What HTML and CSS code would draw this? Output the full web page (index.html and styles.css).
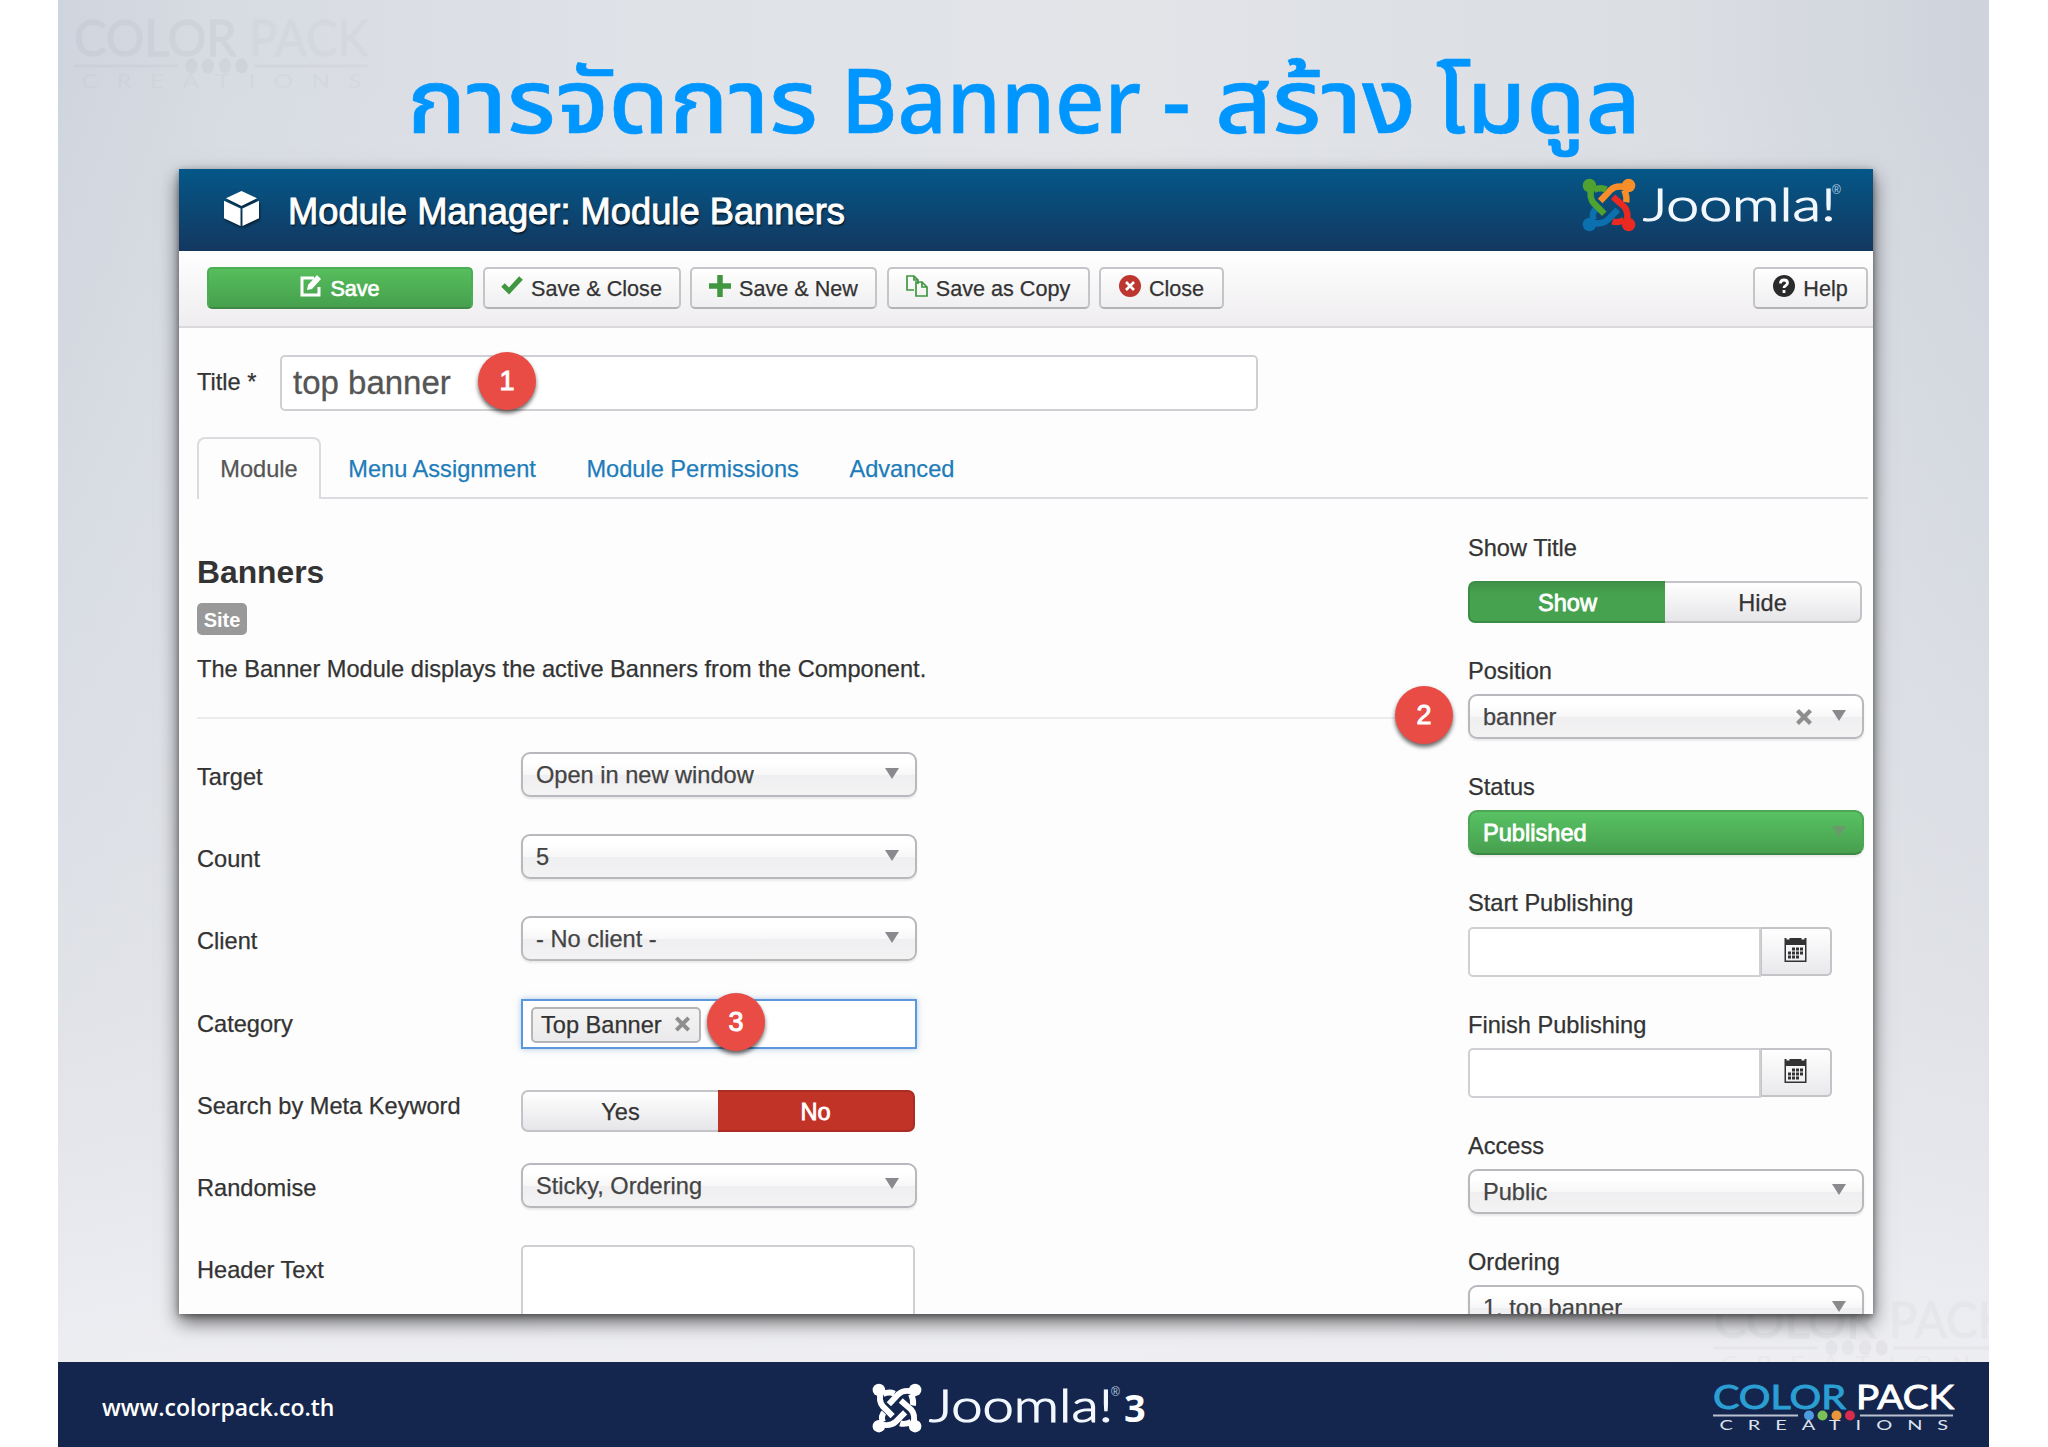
FILE: index.html
```html
<!DOCTYPE html>
<html lang="th">
<head>
  <meta charset="UTF-8">
  <title>การจัดการ Banner - สร้าง โมดูล</title>
  <link rel="stylesheet" href="styles.css">
</head>
<body>

  <!-- shared shapes -->
  <svg class="defs" width="0" height="0">
    <symbol id="joomla-mark" viewBox="0 0 160 160">
      <g class="arm arm-blue">
        <circle cx="22" cy="138" r="20"/>
        <path d="M35 125Q26 105 42 90M28 132Q58 140 75 125L106 94"/>
      </g>
      <g class="arm arm-orange">
        <circle cx="138" cy="22" r="20"/>
        <path d="M125 35Q134 55 131 72"/>
        <path class="gap" d="M84 38L60 62"/>
        <path d="M132 28Q102 20 85 35L54 68"/>
      </g>
      <g class="arm arm-red">
        <circle cx="138" cy="138" r="20"/>
        <path d="M125 125Q105 134 90 129"/>
        <path class="gap" d="M96 60L120 84"/>
        <path d="M132 132Q140 102 125 85L92 56"/>
      </g>
      <g class="arm arm-green">
        <circle cx="22" cy="22" r="20"/>
        <path d="M35 35Q55 26 72 34"/>
        <path class="gap" d="M40 78L64 102"/>
        <path d="M28 28Q20 58 35 75L66 106"/>
      </g>
    </symbol>
    <symbol id="calendar" viewBox="0 0 22 25">
      <path fill="#333" fill-rule="evenodd" d="M0 1h2v1.500h3V1h12v1.500h3V1h2v24H0zM1.500 8v15.500h19V8z"/>
      <path fill="#333" d="M7.500 10.500h3v3h-3zm4 0h3v3h-3zm4 0h3v3h-3zM3.500 14.500h3v3h-3zm4 0h3v3h-3zm4 0h3v3h-3zm4 0h3v3h-3zM3.500 18.500h3v3h-3zm4 0h3v3h-3zm4 0h3v3h-3z"/>
    </symbol>
    <symbol id="cross" viewBox="0 0 18 18">
      <path d="M2.500 2.500l13 13M15.500 2.500l-13 13" stroke="#8e8e8e" stroke-width="4.200" fill="none"/>
    </symbol>
    <symbol id="color-pack" viewBox="0 0 242 48" preserveAspectRatio="none">
      <text class="cp-color" x="0" y="25" textLength="133" lengthAdjust="spacingAndGlyphs">COLOR</text>
      <text class="cp-pack" x="143" y="25" textLength="98" lengthAdjust="spacingAndGlyphs">PACK</text>
      <path class="cp-line" d="M0 31.500h85M147 31.500h93"/>
      <circle cx="96" cy="31.500" r="5" fill="#4f9be0"/>
      <circle cx="109.500" cy="31.500" r="5" fill="#7bbf57"/>
      <circle cx="123.500" cy="31.500" r="5" fill="#e8963a"/>
      <circle cx="137" cy="31.500" r="5" fill="#d92b4b"/>
      <text class="cp-sub" transform="scale(1.6 1)" x="4" y="46" textLength="143">CREATIONS</text>
    </symbol>
  </svg>

  <main class="slide">
    <svg class="watermark watermark-top"><use href="#color-pack"/></svg>
    <svg class="watermark watermark-bottom"><use href="#color-pack"/></svg>

    <h1 class="slide-title">
      <svg width="1240" height="169">
        <text x="0" y="133" textLength="411" lengthAdjust="spacingAndGlyphs">การจัดการ</text>
        <text x="434" y="133" textLength="300" lengthAdjust="spacingAndGlyphs">Banner</text>
        <text x="755" y="133">-</text>
        <text x="808" y="133" textLength="201" lengthAdjust="spacingAndGlyphs">สร้าง</text>
        <text x="1029" y="133" textLength="205" lengthAdjust="spacingAndGlyphs">โมดูล</text>
      </svg>
    </h1>

    <section class="window">
      <header class="window-header">
        <svg class="cube" viewBox="0 0 36 36">
          <path fill="#fff" d="M18 0l16 7.500-16 8-16-8zM0 10l17 8v18L0 28zM36 10l-17 8v18l17-8z"/>
        </svg>
        <h2>Module Manager: Module Banners</h2>
        <svg class="joomla-logo" width="264" height="60" viewBox="0 0 264 60">
          <use href="#joomla-mark" x="0" y="3" width="54" height="54"/>
          <text class="wordmark" x="61" y="46" textLength="193" lengthAdjust="spacingAndGlyphs">Joomla!</text>
          <text class="reg" x="250" y="19">®</text>
        </svg>
      </header>

      <div class="toolbar">
        <button class="btn btn-save">
          <svg viewBox="0 0 22 22"><path d="M14 3H2v17h17v-8" fill="none" stroke="#fff" stroke-width="3"/><path d="M7 15l1-5 9-10 4 4-9 10z" fill="#fff"/></svg>
          Save
        </button>
        <button class="btn btn-save-close">
          <svg viewBox="0 0 22 22"><path d="M2 10l6 6L20 3" fill="none" stroke="#409740" stroke-width="5"/></svg>
          Save &amp; Close
        </button>
        <button class="btn btn-save-new">
          <svg viewBox="0 0 22 22"><path d="M11 0v22M0 11h22" stroke="#409740" stroke-width="5.500"/></svg>
          Save &amp; New
        </button>
        <button class="btn btn-copy">
          <svg viewBox="0 0 22 22"><path d="M8 15H1V1h7l4 4v4M8 1v4h4M10 7h6l5 5v9H10zM16 7v5h5" fill="none" stroke="#409740" stroke-width="1.700"/></svg>
          Save as Copy
        </button>
        <button class="btn btn-close">
          <svg viewBox="0 0 22 22"><circle cx="11" cy="11" r="11" fill="#bd362f"/><path d="M7 7l8 8M15 7l-8 8" stroke="#fff" stroke-width="2.600"/></svg>
          Close
        </button>
        <button class="btn btn-help">
          <svg viewBox="0 0 22 22"><circle cx="11" cy="11" r="11" fill="#2b2b2b"/><path d="M7.500 8.500q0-3.500 3.500-3.500t3.500 3q0 1.500-2 2.700-1.500.8-1.500 2.300M11 15v3" fill="none" stroke="#fff" stroke-width="2.800"/></svg>
          Help
        </button>
      </div>

      <div class="title-row">
        <label for="title">Title *</label>
        <input id="title" class="title-input" type="text" value="top banner">
        <span class="badge badge-1">1</span>
      </div>

      <nav class="tabs">
        <a class="tab active">Module</a>
        <a class="tab">Menu Assignment</a>
        <a class="tab">Module Permissions</a>
        <a class="tab">Advanced</a>
      </nav>

      <div class="columns">
        <div class="main-col">
          <h3>Banners</h3>
          <span class="site-label">Site</span>
          <p>The Banner Module displays the active Banners from the Component.</p>
          <hr>

          <div class="row"><span class="label">Target</span><div class="select">Open in new window<i class="caret"></i></div></div>
          <div class="row"><span class="label">Count</span><div class="select">5<i class="caret"></i></div></div>
          <div class="row"><span class="label">Client</span><div class="select">- No client -<i class="caret"></i></div></div>
          <div class="row">
            <span class="label">Category</span>
            <div class="multi">
              <span class="chip">Top Banner <svg><use href="#cross"/></svg></span>
              <span class="badge badge-3">3</span>
            </div>
          </div>
          <div class="row">
            <span class="label">Search by Meta Keyword</span>
            <div class="switch switch-meta"><span>Yes</span><span class="on-red">No</span></div>
          </div>
          <div class="row"><span class="label">Randomise</span><div class="select">Sticky, Ordering<i class="caret"></i></div></div>
          <div class="row"><span class="label">Header Text</span><div class="textarea"></div></div>
        </div>

        <aside class="side-col">
          <div class="field field-show">
            <span class="label">Show Title</span>
            <div class="switch"><span class="on-green">Show</span><span>Hide</span></div>
          </div>
          <div class="field">
            <span class="label">Position</span>
            <div class="select">banner<svg class="clear"><use href="#cross"/></svg><i class="caret"></i></div>
            <span class="badge badge-2">2</span>
          </div>
          <div class="field">
            <span class="label">Status</span>
            <div class="select published">Published<i class="caret"></i></div>
          </div>
          <div class="field">
            <span class="label">Start Publishing</span>
            <div class="date"><span class="date-input"></span><span class="date-btn"><svg><use href="#calendar"/></svg></span></div>
          </div>
          <div class="field">
            <span class="label">Finish Publishing</span>
            <div class="date"><span class="date-input"></span><span class="date-btn"><svg><use href="#calendar"/></svg></span></div>
          </div>
          <div class="field">
            <span class="label">Access</span>
            <div class="select">Public<i class="caret"></i></div>
          </div>
          <div class="field">
            <span class="label">Ordering</span>
            <div class="select">1. top banner<i class="caret"></i></div>
          </div>
        </aside>
      </div>
    </section>

    <footer class="footer">
      <span class="site-url">www.colorpack.co.th</span>
      <svg class="footer-joomla" width="280" height="60" viewBox="0 0 280 60">
        <use href="#joomla-mark" x="0" y="4" width="50" height="50"/>
        <text class="wordmark" x="57" y="43" textLength="184" lengthAdjust="spacingAndGlyphs">Joomla!</text>
        <text class="reg" x="239" y="17">®</text>
        <text class="three" x="252" y="43">3</text>
      </svg>
      <svg class="footer-logo"><use href="#color-pack"/></svg>
    </footer>
  </main>

</body>
</html>
```
FILE: styles.css
```css
* {
  box-sizing: border-box;
}

body {
  margin: 0;
  background: #fff;
  font-family: "Liberation Sans", Arial, sans-serif;
  font-size: 23.6px;
  color: #333;
  overflow: hidden;
}

.defs {
  position: absolute;
}

.slide {
  position: relative;
  display: flex;
  flex-direction: column;
  width: 1931px;
  height: 1447px;
  margin-left: 58px;
  overflow: hidden;
  background:
    linear-gradient(to bottom, rgba(232, 233, 237, 0) 5%, rgba(230, 231, 235, 0.75) 70%, rgba(240, 240, 244, 0.9) 94%),
    linear-gradient(to right, #cfd5de 0%, #d7dbe2 8%, #dfe2e7 30%, #e2e4e8 55%, #dadde2 85%, #ced3dc 100%);
}

/* Color Pack logo */
.cp-color, .cp-pack {
  font-family: Lato, sans-serif;
  font-size: 33px;
  fill: #2b9fd4;
  stroke: #2b9fd4;
  stroke-width: 0.9px;
}

.cp-pack {
  fill: #fff;
  stroke: #fff;
}

.cp-line {
  stroke: #b9c0d0;
  stroke-width: 2;
}

.cp-sub {
  font-family: Lato, sans-serif;
  font-size: 12.5px;
  fill: #dfe3ee;
}

.watermark {
  position: absolute;
  width: 296px;
  height: 73px;
  opacity: 0.045;
  filter: grayscale(0.7) brightness(0.5);
}

.watermark-top {
  left: 16px;
  top: 18px;
}

.watermark-bottom {
  left: 1656px;
  top: 1300px;
}

.slide-title {
  height: 169px;
  margin: 0 0 0 349px;
}

.slide-title svg {
  display: block;
  overflow: visible;
}

.slide-title text {
  font-family: "Noto Sans", "Noto Sans Thai", sans-serif;
  font-size: 89px;
  font-weight: 500;
  fill: #0096ff;
  stroke: #0096ff;
  stroke-width: 0.6px;
}

/* Joomla window */
.window {
  position: relative;
  flex: none;
  width: 1694px;
  height: 1145px;
  margin-left: 121px;
  background: #fdfdfd;
  overflow: hidden;
  box-shadow: 0 8px 18px rgba(0, 0, 0, 0.6), 0 2px 6px rgba(0, 0, 0, 0.35);
}

.window-header {
  display: flex;
  align-items: center;
  height: 82px;
  padding: 0 28px 0 45px;
  background: linear-gradient(#045788, #133860);
}

.cube {
  width: 35px;
  height: 37px;
  margin-top: -4px;
  filter: drop-shadow(1px 2px 1px rgba(0, 0, 0, 0.5));
}

.window-header h2 {
  margin: 4px 0 0 29px;
  font-size: 36.3px;
  font-weight: normal;
  color: #fff;
  -webkit-text-stroke: 0.9px #fff;
  text-shadow: 1px 2px 2px rgba(0, 0, 0, 0.7);
}

.joomla-logo {
  margin: -10px -1px 0 auto;
}

.arm {
  fill: none;
  stroke-width: 19;
}

.arm-green { color: var(--mark, #4fa22f); }
.arm-orange { color: var(--mark, #f78e2a); }
.arm-red { color: var(--mark, #ea2a20); }
.arm-blue { color: var(--mark, #0c6fae); }

.arm circle {
  fill: currentColor;
}

.arm path {
  stroke: currentColor;
}

/* dark edge where one white arm crosses another */
.arm .gap {
  stroke: var(--gap, none);
  stroke-width: 26;
}

.wordmark {
  font-family: Lato, sans-serif;
  font-weight: 300;
  font-size: 45px;
  fill: #f3f8ff;
  stroke: #f3f8ff;
  stroke-width: 1.2px;
}

.reg {
  font-size: 12px;
  fill: #b9cfe6;
}

.toolbar {
  display: flex;
  align-items: flex-start;
  height: 77px;
  padding: 16px 5px 0 28px;
  background: linear-gradient(#fff, #efedef);
  border-bottom: 2px solid #d9d9db;
}

.btn {
  display: flex;
  align-items: center;
  justify-content: center;
  gap: 8px;
  height: 42px;
  margin: 0 0 0 9.5px;
  padding: 2px 0 0;
  border: 2px solid #c5c4c8;
  border-bottom-color: #b3b2b5;
  border-radius: 5px;
  background: linear-gradient(#fff, #efeef0);
  font-family: inherit;
  font-size: 21.6px;
  color: #333;
  -webkit-text-stroke: 0.25px currentColor;
}

.btn svg {
  width: 22px;
  height: 22px;
  margin-top: -6px;
}

.btn-save {
  width: 266px;
  margin-left: 0;
  background: linear-gradient(#56bd5c, #46a04d);
  border-color: #4cae54;
  border-bottom-color: #3f8a45;
  color: #fff;
  -webkit-text-stroke: 0.7px #fff;
}

.btn-save-close { width: 198px; }
.btn-save-new { width: 187px; }
.btn-copy { width: 203px; }
.btn-close { width: 125px; }
.btn-help { width: 115px; margin-left: auto; }

.title-row {
  position: relative;
  display: flex;
  align-items: center;
  height: 109px;
  padding-left: 18px;
}

.title-row label {
  width: 83px;
}

.title-input {
  width: 978px;
  height: 56px;
  padding: 0 11px;
  border: 2px solid #d0d0d4;
  border-radius: 5px;
  background: #fff;
  font-family: inherit;
  font-size: 33px;
  color: #555;
  -webkit-text-stroke: 0.3px currentColor;
}

.title-row label,
.label,
.tab,
.select,
.chip,
.switch,
.main-col p {
  -webkit-text-stroke: 0.25px currentColor;
}

/* numbered callouts */
.badge {
  position: absolute;
  width: 58px;
  height: 58px;
  border-radius: 50%;
  background: #e94b45;
  box-shadow: 0 3px 4px rgba(0, 0, 0, 0.6);
  color: #fff;
  font-size: 27px;
  -webkit-text-stroke: 1px #fff;
  line-height: 59px;
  text-align: center;
}

.badge-1 {
  left: 299px;
  top: 24px;
}

.badge-2 {
  left: -73px;
  top: 28px;
}

.badge-3 {
  left: 184px;
  top: -8px;
}

.tabs {
  display: flex;
  height: 62px;
  margin: 0 5px 0 18px;
  border-bottom: 2px solid #dcdbe0;
}

.tab {
  height: 60px;
  margin-right: 4px;
  padding: 0 21.3px;
  border: 2px solid transparent;
  border-bottom: none;
  line-height: 60px;
  color: #1d7cba;
}

.tab.active {
  height: 62px;
  border-color: #dcdbe0;
  border-radius: 8px 8px 0 0;
  background: #fdfdfd;
  color: #555;
}

.columns {
  display: flex;
  padding-left: 18px;
}

.main-col {
  width: 1200px;
  margin-right: 71px;
}

.main-col h3 {
  margin: 55px 0 0;
  font-size: 31.8px;
  line-height: 36px;
}

.site-label {
  display: block;
  width: 50px;
  height: 32px;
  margin-top: 13px;
  border-radius: 5px;
  background: #999;
  color: #fff;
  font-size: 20px;
  font-weight: bold;
  line-height: 34px;
  text-align: center;
}

.main-col p {
  margin: 21px 0 0;
  line-height: 26px;
}

.main-col hr {
  height: 2px;
  margin: 35px 0 33px;
  border: none;
  background: #ececef;
}

.row {
  display: flex;
  height: 82.2px;
}

.row .label {
  width: 324px;
  padding-top: 12px;
  line-height: 26px;
}

.select {
  position: relative;
  display: flex;
  align-items: center;
  width: 396px;
  height: 45px;
  padding: 2px 16px 0 13px;
  border: 2px solid #b9b8bd;
  border-radius: 9px;
  background: linear-gradient(#fff 20%, #f7f7f8 50%, #efeef0 52%, #f3f3f4 100%);
  box-shadow: 0 2px 2px rgba(0, 0, 0, 0.08);
  color: #444;
}

.caret {
  margin: -5px 0 0 auto;
  border: 7px solid transparent;
  border-top: 11px solid #8a8a8e;
  border-bottom: none;
}

.clear {
  width: 18px;
  height: 18px;
  margin: -2px 0 0 auto;
}

.clear + .caret {
  margin-left: 19px;
}

.published {
  background: linear-gradient(#58c163, #47a04e);
  border-color: #4da656;
  border-bottom-color: #3c8743;
  color: #fff;
  -webkit-text-stroke: 0.8px #fff;
}

.published .caret {
  border-top-color: #6a9a6b;
}

.multi {
  position: relative;
  width: 396px;
  height: 50px;
  padding: 6px 8px;
  border: 2px solid #5c97dc;
  background: #fff;
  box-shadow: 0 0 6px rgba(90, 150, 220, 0.5);
}

.chip {
  display: flex;
  align-items: center;
  width: 170px;
  height: 36px;
  padding: 1px 8px 0 8px;
  border: 2px solid #b5b5b8;
  border-radius: 5px;
  background: linear-gradient(#f4f4f4, #eaeaec);
  white-space: nowrap;
}

.chip svg {
  width: 17px;
  height: 18px;
  margin: -2px 0 0 auto;
}

.switch {
  display: flex;
  width: 394px;
  height: 42px;
}

.switch span {
  flex: 1;
  border: 2px solid #c4c3c8;
  border-radius: 7px;
  background: linear-gradient(#fff, #e6e5e8);
  line-height: 41px;
  text-align: center;
}

.switch span:first-child {
  border-right-width: 0;
  border-radius: 7px 0 0 7px;
}

.switch span:last-child {
  border-left-width: 0;
  border-radius: 0 7px 7px 0;
}

.switch-meta {
  margin-top: 9px;
}

.switch .on-red {
  border-color: #ab2c22;
  background: #c23327;
  color: #fff;
  -webkit-text-stroke: 0.8px #fff;
}

.switch .on-green {
  border-color: #3b8c45;
  background: linear-gradient(#419249, #46a24e 30%);
  color: #fff;
  -webkit-text-stroke: 0.8px #fff;
}

.textarea {
  width: 394px;
  height: 120px;
  border: 2px solid #d0d0d4;
  border-radius: 5px;
  background: #fff;
}

.side-col {
  display: flex;
  flex-direction: column;
  gap: 35px;
  width: 396px;
  padding-top: 36px;
}

.field {
  position: relative;
}

.field .label {
  display: block;
  margin-bottom: 10.2px;
  line-height: 26px;
}

.field-show .label {
  margin-bottom: 20px;
}

.date {
  display: flex;
}

.date-input {
  width: 293px;
  height: 50px;
  border: 2px solid #d0d0d4;
  border-radius: 5px 0 0 5px;
  background: #fff;
}

.date-btn {
  width: 71px;
  height: 49px;
  padding: 8px 0 0 22px;
  border: 2px solid #c4c3c8;
  border-left-width: 1px;
  border-radius: 0 5px 5px 0;
  background: linear-gradient(#fff, #e9e8eb);
}

.date-btn svg {
  display: block;
  width: 23px;
  height: 25px;
}

.footer {
  display: flex;
  align-items: center;
  position: relative;
  height: 85px;
  margin-top: 48px;
  padding: 4px 34px 0 44px;
  background: #14264d;
}

.site-url {
  width: 770px;
  font-family: "Open Sans", sans-serif;
  font-size: 23px;
  font-weight: 600;
  color: #fff;
}

.footer-joomla {
  --mark: #fff;
  --gap: #14264d;
  margin-top: 4px;
}

.three {
  font-family: "Open Sans", sans-serif;
  font-weight: bold;
  font-size: 38px;
  fill: #fff;
}

.footer-logo {
  width: 242px;
  height: 48px;
  margin: 2px 0 0 auto;
}
```
